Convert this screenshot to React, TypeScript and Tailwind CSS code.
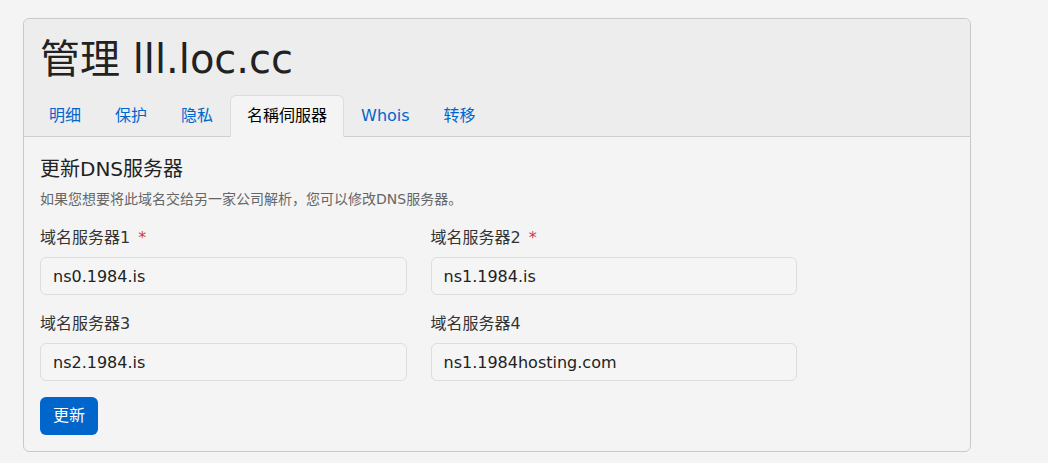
import React from 'react';

const tabs = ['明细', '保护', '隐私', '名稱伺服器', 'Whois', '转移'];

const servers = [
  { label: '域名服务器1', value: 'ns0.1984.is', required: true },
  { label: '域名服务器2', value: 'ns1.1984.is', required: true },
  { label: '域名服务器3', value: 'ns2.1984.is', required: false },
  { label: '域名服务器4', value: 'ns1.1984hosting.com', required: false },
];

export default function App() {
  const active = 3;
  return (
    <div
      className="min-h-[463px] bg-[#f4f4f4] pl-[23px] pt-[18px] pb-[11px] text-[#212529]"
      style={{ fontFamily: '"DejaVu Sans", "Noto Sans CJK SC", sans-serif' }}
    >
      <div className="w-[948px] rounded-[6px] border border-[#c9c9c9] bg-[#f4f4f4]">
        <div className="rounded-t-[6px] border-b border-[#cfcfcf] bg-[#ededed] px-4 pt-4">
          <h1 className="mb-3 text-[40px] leading-[48px] text-[#222]">管理 lll.loc.cc</h1>
          <ul className="-mx-2 -mb-px flex">
            {tabs.map((tab, i) => (
              <li key={tab}>
                <a
                  href="#"
                  className={
                    i === active
                      ? 'block rounded-t-[6px] border border-b-[#f4f4f4] border-[#dcdcdc] bg-[#f4f4f4] px-4 py-2 text-base leading-6 text-black'
                      : 'block rounded-t-[6px] border border-transparent px-4 py-2 text-base leading-6 text-[#0066cc]'
                  }
                >
                  {tab}
                </a>
              </li>
            ))}
          </ul>
        </div>
        <div className="px-4 pt-5 pb-4">
          <h5 className="text-[20px] leading-6 text-[#222]">更新DNS服务器</h5>
          <p className="mt-[8px] text-[14px] leading-5 text-[#666]">如果您想要将此域名交给另一家公司解析，您可以修改DNS服务器。</p>
          <div className="mt-[17px] grid w-[757px] grid-cols-2 gap-x-6 gap-y-[17px]">
            {servers.map((s) => (
              <div key={s.label}>
                <label className="mb-[7px] block text-base leading-6 text-[#333]">
                  {s.label}
                  {s.required && <span className="ml-2 text-[#dc3545]">*</span>}
                </label>
                <input
                  readOnly
                  value={s.value}
                  className="block h-[38px] w-full rounded-[6px] border border-[#dddddd] bg-[#f5f5f5] px-3 text-base text-[#222] outline-none"
                />
              </div>
            ))}
          </div>
          <button className="mt-4 h-[38px] rounded-[6px] bg-[#0066cc] px-[13px] text-base text-white">更新</button>
        </div>
      </div>
    </div>
  );
}
